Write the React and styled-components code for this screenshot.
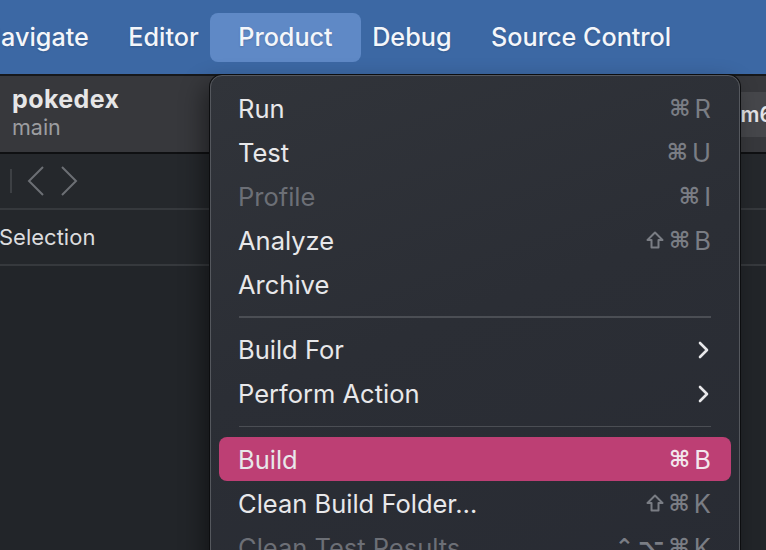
import styled, { createGlobalStyle } from "styled-components"

const GlobalStyle = createGlobalStyle`
  html, body {
    margin: 0;
    padding: 0;
    width: 766px;
    height: 550px;
    overflow: hidden;
    background: #222529;
    font-family: Inter, "Noto Sans", sans-serif;
  }
  #root {
    height: 550px;
  }
`

const menuBarItems = ["Navigate", "Editor", "Product", "Debug", "Source Control"]

const menuGroups = [
  [
    { label: "Run", keys: ["⌘", "R"] },
    { label: "Test", keys: ["⌘", "U"] },
    { label: "Profile", keys: ["⌘", "I"], disabled: true },
    { label: "Analyze", keys: ["⇧", "⌘", "B"] },
    { label: "Archive" },
  ],
  [
    { label: "Build For", submenu: true },
    { label: "Perform Action", submenu: true },
  ],
  [
    { label: "Build", keys: ["⌘", "B"], active: true },
    { label: "Clean Build Folder…", keys: ["⇧", "⌘", "K"] },
    { label: "Clean Test Results", keys: ["⌃", "⌥", "⌘", "K"], disabled: true },
  ],
]

function ShiftIcon() {
  return (
    <svg width="20" height="20" viewBox="0 0 20 20">
      <path d="M10 2.5 L17.5 10 L13.5 10 L13.5 17.5 L6.5 17.5 L6.5 10 L2.5 10 Z" fill="none" stroke="currentColor" strokeWidth="2" strokeLinejoin="round" />
    </svg>
  )
}

export default function App() {
  return (
    <>
      <GlobalStyle />
      <Screen>
        <MenuBar>
          {menuBarItems.map((item, i) => (
            <BarItem key={item} $open={item === "Product"} $first={i === 0}>
              {item}
            </BarItem>
          ))}
        </MenuBar>

        <Toolbar>
          <Project>
            <h3>pokedex</h3>
            <p>main</p>
          </Project>
          <Destination>arm64</Destination>
        </Toolbar>

        <NavRow>
          <NavDivider />
          <NavButton>
            <svg width="18" height="30" viewBox="0 0 18 30">
              <path d="M16 1 L2 15 L16 29" fill="none" stroke="#6c6f74" strokeWidth="2" />
            </svg>
          </NavButton>
          <NavButton>
            <svg width="18" height="30" viewBox="0 0 18 30">
              <path d="M2 1 L16 15 L2 29" fill="none" stroke="#6c6f74" strokeWidth="2" />
            </svg>
          </NavButton>
        </NavRow>

        <SelectionRow>Selection</SelectionRow>
        <Rest />

        <Menu>
          {menuGroups.map((group, gi) => (
            <div key={gi}>
              {gi > 0 && <Separator />}
              {group.map((item) => (
                <MenuItem key={item.label} $active={item.active} $disabled={item.disabled}>
                  <span>{item.label}</span>
                  {item.keys && (
                    <Shortcut $active={item.active}>
                      {item.keys.map((k, ki) =>
                        k === "⇧" ? (
                          <ShiftIcon key={ki} />
                        ) : (
                          <Key key={ki} $mod={ki < item.keys.length - 1}>{k}</Key>
                        )
                      )}
                    </Shortcut>
                  )}
                  {item.submenu && (
                    <svg width="14" height="20" viewBox="0 0 14 20">
                      <path d="M3 3 L10 10 L3 17" fill="none" stroke="#e8e8ea" strokeWidth="2.6" strokeLinecap="round" strokeLinejoin="round" />
                    </svg>
                  )}
                </MenuItem>
              ))}
            </div>
          ))}
        </Menu>
      </Screen>
    </>
  )
}

const Screen = styled.div`
  position: relative;
  width: 766px;
  height: 550px;
  overflow: hidden;
  display: flex;
  flex-direction: column;
  background: #222529;
`

const MenuBar = styled.div`
  display: flex;
  align-items: center;
  height: 74px;
  flex-shrink: 0;
  background: #3c68a4;
  border-bottom: 2px solid #16181b;
`

const BarItem = styled.div`
  display: flex;
  align-items: center;
  height: 49px;
  padding: 0 28px;
  margin: 0 -8px;
  margin-left: ${(p) => (p.$first ? "-46px" : "-8.5px")};
  border-radius: 8px;
  background: ${(p) => (p.$open ? "#5f89c6" : "transparent")};
  color: #f4f6fa;
  font-size: 25.2px;
  font-weight: 500;
  white-space: nowrap;
  text-shadow: 0 1px 2px rgba(0, 0, 0, 0.15);
`

const Toolbar = styled.div`
  display: grid;
  grid-template-columns: 712px 1fr;
  align-items: center;
  height: 76px;
  flex-shrink: 0;
  background: #37383c;
  border-bottom: 2px solid #0f1012;
`

const Project = styled.div`
  padding-left: 12px;
  margin-top: -3px;
  & > h3 {
    margin: 0;
    color: #e6e6e7;
    font-size: 25px;
    font-weight: 700;
    letter-spacing: 0.4px;
    line-height: 29px;
  }
  & > p {
    margin: 0;
    color: #9c9da0;
    font-size: 21.5px;
    line-height: 26px;
  }
`

const Destination = styled.div`
  height: 45px;
  display: flex;
  align-items: center;
  padding-left: 8px;
  background: #46474b;
  border-radius: 6px 0 0 6px;
  color: #e4e4e6;
  font-size: 21px;
  font-weight: 600;
  white-space: nowrap;
`

const NavRow = styled.div`
  display: flex;
  align-items: center;
  gap: 22px;
  height: 54px;
  flex-shrink: 0;
  padding-left: 10px;
  background: #25282c;
  border-bottom: 2px solid #36393d;
`

const NavDivider = styled.div`
  width: 2px;
  height: 24px;
  background: #3d4044;
`

const NavButton = styled.div`
  display: flex;
  align-items: center;
  margin-left: -7px;
`

const SelectionRow = styled.div`
  display: flex;
  align-items: center;
  height: 54px;
  flex-shrink: 0;
  margin-left: -1px;
  color: #dcdcde;
  font-size: 22px;
  background: #24272b;
  border-bottom: 2px solid #36393d;
`

const Rest = styled.div`
  flex: 1;
  background: #222529;
`

const Menu = styled.div`
  position: absolute;
  left: 210px;
  top: 75px;
  width: 512px;
  height: 520px;
  padding: 10px 8px;
  border: 1.5px solid #55585e;
  border-radius: 12px 12px 0 0;
  background: linear-gradient(160deg, #31343a 0%, #2b2e35 45%, #282b33 100%);
  box-shadow: 0 0 0 1px #0c0d0f, -6px 10px 24px rgba(0, 0, 0, 0.45);
`

const MenuItem = styled.div`
  display: flex;
  align-items: center;
  justify-content: space-between;
  height: 44px;
  padding: 0 20px 0 19px;
  border-radius: 8px;
  background: ${(p) => (p.$active ? "#bd3f74" : "transparent")};
  color: ${(p) => (p.$disabled ? "#6c6f76" : "#e8e8ea")};
  font-size: 25.5px;
  white-space: nowrap;
`

const Shortcut = styled.div`
  display: flex;
  align-items: center;
  gap: 4px;
  color: ${(p) => (p.$active ? "#f3e6ec" : "#7a7d84")};
`

const Key = styled.span`
  font-family: ${(p) => (p.$mod ? '"DejaVu Sans", sans-serif' : 'Inter, sans-serif')};
  font-size: ${(p) => (p.$mod ? "23px" : "25.5px")};
  font-weight: ${(p) => (p.$mod ? 700 : 400)};
`

const Separator = styled.div`
  height: 1.5px;
  margin: 10px 20px 10px 20px;
  background: #4b4e54;
`
